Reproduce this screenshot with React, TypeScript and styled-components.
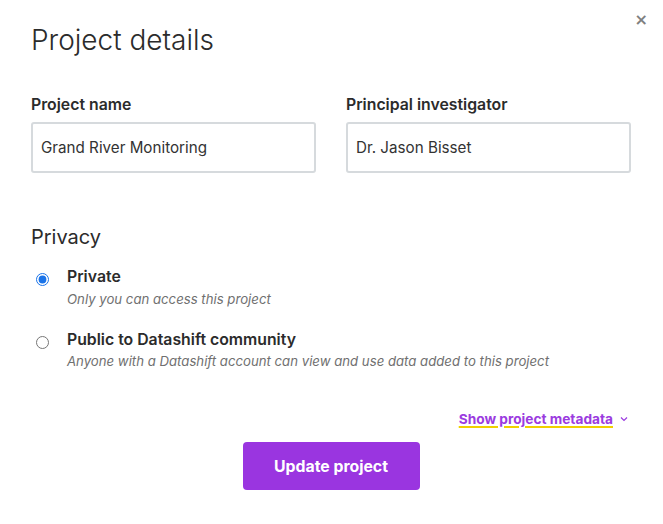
import styled, { createGlobalStyle } from "styled-components";

const GlobalStyle = createGlobalStyle`
  body {
    margin: 0;
    background: #fff;
    font-family: Inter, "Noto Sans", sans-serif;
    color: #2b2b2b;
  }
`;

const options = [
  {
    id: "private",
    title: "Private",
    hint: "Only you can access this project",
    checked: true,
  },
  {
    id: "public",
    title: "Public to Datashift community",
    hint: "Anyone with a Datashift account can view and use data added to this project",
    checked: false,
  },
];

const App = () => {
  return (
    <>
      <GlobalStyle />
      <Modal>
        <Close aria-label="Close">×</Close>
        <Title>Project details</Title>
        <Fields>
          <Field>
            <Label>Project name</Label>
            <Input defaultValue="Grand River Monitoring" />
          </Field>
          <Field>
            <Label>Principal investigator</Label>
            <Input defaultValue="Dr. Jason Bisset" />
          </Field>
        </Fields>
        <Section>
          <SectionTitle>Privacy</SectionTitle>
          <Options>
            {options.map((o) => (
              <Option key={o.id}>
                <Radio type="radio" name="privacy" defaultChecked={o.checked} />
                <div>
                  <OptionTitle>{o.title}</OptionTitle>
                  <OptionHint>{o.hint}</OptionHint>
                </div>
              </Option>
            ))}
          </Options>
        </Section>
        <MetaRow>
          <MetaLink href="#">Show project metadata</MetaLink>
          <svg width="8" height="6" viewBox="0 0 8 6">
            <path d="M1 1.5 L4 4.5 L7 1.5" fill="none" stroke="#9b3be0" strokeWidth="1.2" />
          </svg>
        </MetaRow>
        <Footer>
          <Button>Update project</Button>
        </Footer>
      </Modal>
    </>
  );
};

export default App;

const Modal = styled.div`
  position: relative;
  width: 663px;
  height: 524px;
  box-sizing: border-box;
  padding: 23px 32px 0 31px;
`;

const Close = styled.button`
  position: absolute;
  top: 10px;
  right: 15px;
  border: none;
  background: none;
  padding: 0;
  font-size: 16px;
  font-weight: 700;
  color: #808080;
  cursor: pointer;
  font-family: "DejaVu Sans", sans-serif;
`;

const Title = styled.h1`
  margin: 0;
  font-size: 28px;
  font-weight: 300;
  color: #2b2b2b;
  line-height: 34px;
`;

const Fields = styled.div`
  display: grid;
  grid-template-columns: 1fr 1fr;
  gap: 30px;
  margin-top: 38px;
`;

const Field = styled.div`
  display: flex;
  flex-direction: column;
`;

const Label = styled.label`
  font-size: 15.8px;
  font-weight: 600;
  color: #2b2b2b;
  line-height: 20px;
  margin-bottom: 7px;
`;

const Input = styled.input`
  height: 51px;
  box-sizing: border-box;
  border: 2px solid #d6dadd;
  border-radius: 3px;
  padding: 0 8px;
  font-family: Inter, sans-serif;
  font-size: 15.2px;
  color: #333;
  outline: none;
`;

const Section = styled.div`
  margin-top: 51px;
`;

const SectionTitle = styled.h2`
  margin: 0;
  font-size: 20px;
  font-weight: 400;
  color: #2b2b2b;
  line-height: 26px;
`;

const Options = styled.div`
  display: flex;
  flex-direction: column;
  gap: 22px;
  margin-top: 17px;
`;

const Option = styled.label`
  display: flex;
  align-items: flex-start;
  gap: 18px;
`;

const Radio = styled.input`
  margin: 6px 0 0 5px;
  width: 13px;
  height: 13px;
  accent-color: #1a73e8;
`;

const OptionTitle = styled.div`
  font-size: 15.8px;
  font-weight: 600;
  color: #2b2b2b;
  line-height: 20px;
`;

const OptionHint = styled.div`
  margin-top: 3.5px;
  font-size: 13.2px;
  font-style: italic;
  color: #707070;
  line-height: 17px;
`;

const MetaRow = styled.div`
  display: flex;
  justify-content: flex-end;
  align-items: center;
  gap: 7px;
  margin-top: 41px;
  padding-right: 3px;
`;

const MetaLink = styled.a`
  font-size: 13.7px;
  font-weight: 700;
  color: #9b3be0;
  text-decoration: underline;
  text-decoration-color: #f0d000;
  text-decoration-thickness: 2px;
  text-underline-offset: 2px;
`;

const Footer = styled.div`
  display: flex;
  justify-content: center;
  margin-top: 15px;
`;

const Button = styled.button`
  width: 177px;
  height: 48px;
  border: none;
  border-radius: 4px;
  background: #9a35e0;
  color: #fff;
  font-family: Inter, sans-serif;
  font-size: 15.8px;
  font-weight: 700;
  cursor: pointer;
`;
